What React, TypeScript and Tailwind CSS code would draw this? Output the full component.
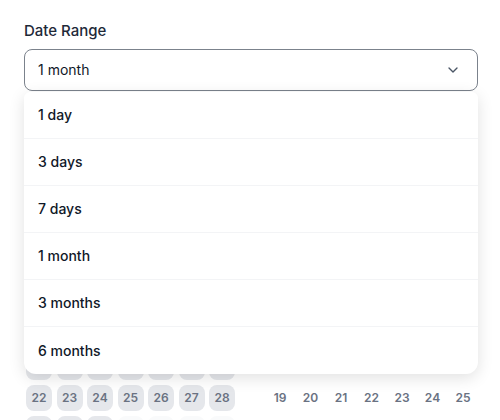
import { ChevronDown } from "lucide-react";

const options = ["1 day", "3 days", "7 days", "1 month", "3 months", "6 months"];

type Day = { n: number | null; tone: "range" | "faint" | "none" };

const leftWeeks: Day[][] = [
  [1, 2, 3, 4, 5, 6, 7],
  [8, 9, 10, 11, 12, 13, 14],
  [15, 16, 17, 18, 19, 20, 21],
  [22, 23, 24, 25, 26, 27, 28],
].map((w) => w.map((n) => ({ n, tone: "range" as const })));
leftWeeks.push([
  { n: 29, tone: "range" },
  { n: 30, tone: "range" },
  { n: 31, tone: "range" },
  { n: null, tone: "faint" },
  { n: null, tone: "faint" },
  { n: null, tone: "faint" },
  { n: null, tone: "faint" },
]);

const rightWeeks: Day[][] = [
  [null, null, null, 1, 2, 3, 4],
  [5, 6, 7, 8, 9, 10, 11],
  [12, 13, 14, 15, 16, 17, 18],
  [19, 20, 21, 22, 23, 24, 25],
  [26, 27, 28, 29, 30, 31, null],
].map((w) => w.map((n) => ({ n, tone: "none" as const })));

function Month({ title, weeks }: { title: string; weeks: Day[][] }) {
  return (
    <div className="w-[209px]">
      <div className="mb-2 h-5 text-center text-sm font-semibold text-gray-800">{title}</div>
      <div className="grid grid-cols-7 gap-x-[4.5px] gap-y-[5px]">
        {["Su", "Mo", "Tu", "We", "Th", "Fr", "Sa"].map((d) => (
          <div key={d} className="flex h-[26px] items-center justify-center text-xs text-gray-400">
            {d}
          </div>
        ))}
        {weeks.flat().map((day, i) => (
          <div
            key={i}
            className={
              day.tone === "range"
                ? "flex h-[26px] w-[26px] items-center justify-center rounded-lg bg-gray-200 text-xs font-semibold text-gray-500"
                : day.tone === "faint"
                  ? "flex h-[26px] w-[26px] items-center justify-center rounded-lg bg-gray-50 text-xs font-semibold text-gray-300"
                  : "flex h-[26px] w-[26px] items-center justify-center text-xs font-semibold text-gray-500"
            }
          >
            {day.n}
          </div>
        ))}
      </div>
    </div>
  );
}

export default function App() {
  return (
    <div
      className="h-[420px] w-[500px] overflow-hidden bg-white pl-6 pr-[22px] pt-[21px]"
      style={{ fontFamily: "Inter, 'Noto Sans', sans-serif" }}
    >
      <label className="mb-2 block h-5 text-[15px] font-medium leading-5 text-gray-800">Date Range</label>

      <div className="relative">
        <button className="flex h-[42px] w-full items-center justify-between rounded-lg border border-[#7b828c] bg-white pl-[13px] pr-4 text-sm text-gray-900">
          <span>1 month</span>
          <ChevronDown className="h-4 w-4 text-gray-600" strokeWidth={2} />
        </button>

        <ul className="absolute left-0 right-0 top-[43px] z-10 overflow-hidden rounded-b-xl rounded-t-md bg-white shadow-[0_4px_16px_rgba(0,0,0,0.12)]">
          {options.map((opt, i) => (
            <li
              key={opt}
              className={
                i < options.length - 1
                  ? "flex h-[47px] items-center border-b border-gray-100 pl-[14px] text-sm font-medium text-gray-900"
                  : "flex h-[47px] items-center pl-[14px] text-sm font-medium text-gray-900"
              }
            >
              {opt}
            </li>
          ))}
        </ul>

        <div className="ml-0.5 mt-[142px] flex gap-8">
          <Month title="January" weeks={leftWeeks} />
          <Month title="February" weeks={rightWeeks} />
        </div>
      </div>
    </div>
  );
}
